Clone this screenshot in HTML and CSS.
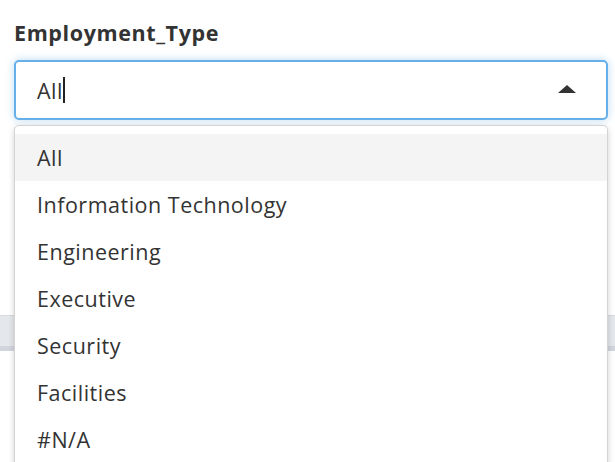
FILE: index.html
```html
<!DOCTYPE html>
<html>
<head>
<meta charset="utf-8">
<link rel="stylesheet" href="styles.css">
</head>
<body>
<div class="page">
  <div class="backdrop">
    <div class="band"></div>
  </div>
  <div class="field">
    <label class="label">Employment_Type</label>
    <div class="control">
      <span class="value">All</span><span class="caret"></span>
      <span class="arrow"></span>
    </div>
    <ul class="menu">
      <li class="opt active">All</li>
      <li class="opt">Information Technology</li>
      <li class="opt">Engineering</li>
      <li class="opt">Executive</li>
      <li class="opt">Security</li>
      <li class="opt">Facilities</li>
      <li class="opt">#N/A</li>
    </ul>
  </div>
</div>
</body>
</html>
```

FILE: styles.css
```css
* { box-sizing: border-box; }
html, body { margin: 0; padding: 0; background: #fff; overflow: hidden; }
body { font-family: "Open Sans", "Noto Sans", sans-serif; color: #333; }
.page { position: relative; width: 615px; height: 462px; overflow: hidden; }
.backdrop { position: absolute; left: 0; right: 0; top: 290px; height: 70px; }
.band { margin-top: 25px; height: 36px; background: #e4e7eb; border-top: 1px solid #d6dade; border-bottom: 5px solid #d2d6dc; }
.field { position: relative; padding: 18px 7px 0 14px; }
.label { display: block; font-weight: 700; font-size: 21.5px; letter-spacing: 0.6px; line-height: 30px; color: #333; margin-bottom: 12px; }
.control {
  height: 60px; border: 2px solid #66afe9; border-radius: 5px; background: #fff;
  box-shadow: 0 0 8px rgba(102,175,233,.45);
  display: flex; align-items: center; padding-left: 21px; position: relative;
  font-size: 21.5px; letter-spacing: 0.5px;
}
.caret { display: inline-block; width: 2px; height: 26px; background: #222; margin-left: 0; }
.arrow { position: absolute; right: 30px; top: 23px; width: 0; height: 0;
  border-left: 9px solid transparent; border-right: 9px solid transparent; border-bottom: 8px solid #333; }
.menu {
  list-style: none; margin: 5px 0 0; padding: 8px 0 0; background: #fff;
  border: 1px solid #d4d4d4; border-radius: 5px;
  box-shadow: 0 2px 6px rgba(0,0,0,.18);
  height: 400px; position: relative; z-index: 2;
}
.opt { height: 47px; line-height: 47px; padding-left: 22px; font-size: 21.5px; letter-spacing: 0.5px; color: #333; }
.opt.active { background: #f4f4f4; }
```
